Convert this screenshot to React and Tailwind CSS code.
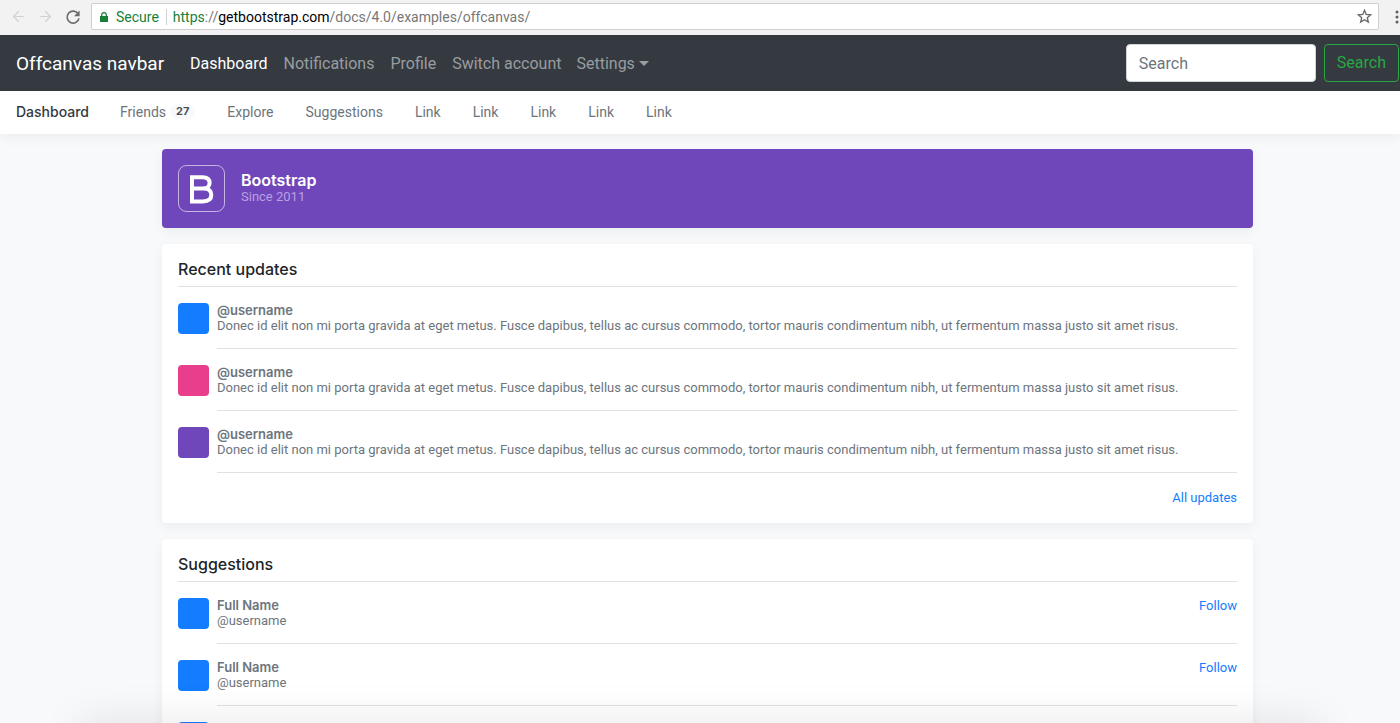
import { ArrowLeft, ArrowRight } from "lucide-react";

const navLinks = ["Notifications", "Profile", "Switch account"];
const scrollerLinks = ["Explore", "Suggestions", "Link", "Link", "Link", "Link", "Link"];
const updateColors = ["bg-[#147dff]", "bg-[#e83e8c]", "bg-[#6f47ba]"];
const updateText =
  "Donec id elit non mi porta gravida at eget metus. Fusce dapibus, tellus ac cursus commodo, tortor mauris condimentum nibh, ut fermentum massa justo sit amet risus.";

function BrowserBar() {
  return (
    <div className="flex h-[35px] shrink-0 items-center bg-[#f2f2f2] pb-0.5 pl-2.5">
      <button type="button" aria-label="Back" className="text-[#d2d2d2]">
        <ArrowLeft size={17} strokeWidth={1.75} />
      </button>
      <button type="button" aria-label="Forward" className="ml-2.5 text-[#d2d2d2]">
        <ArrowRight size={17} strokeWidth={1.75} />
      </button>
      <button type="button" aria-label="Reload" className="ml-2.5 text-[#6b6b6b]">
        <svg viewBox="0 0 18 18" className="size-[18px]" fill="none" stroke="currentColor" strokeWidth="1.7">
          <path d="M14 5.6A6 6 0 1 0 15 10.4" />
          <path d="M15.6 2.6v5.6H10z" fill="currentColor" stroke="none" />
        </svg>
      </button>
      <div className="ml-[9px] flex h-[27px] flex-1 items-center rounded-xs border border-[#cfcfcf] bg-white pr-1.5 pl-2 text-sm">
        <svg viewBox="0 0 8 10" className="h-2.5 w-2" fill="#188038">
          <path d="M0 4h8v6H0z" />
          <path d="M1.7 4.5V3a2.3 2.3 0 0 1 4.6 0v1.5" fill="none" stroke="#188038" strokeWidth="1.2" />
        </svg>
        <span className="ml-2 text-[#188038]">Secure</span>
        <span className="mr-1.5 ml-[7px] h-4 w-px bg-[#d0d0d0]" />
        <span className="flex-1 text-[#777]">
          <span className="text-[#188038]">https</span>://<span className="text-black">getbootstrap.com</span>
          /docs/4.0/examples/offcanvas/
        </span>
        <button type="button" aria-label="Bookmark this page" className="text-[#666]">
          <svg viewBox="0 0 14 14" className="size-[15px]" fill="none" stroke="currentColor" strokeWidth="1.2">
            <path d="M7 1.2l1.6 3.9 4.2.3-3.2 2.7 1 4.1L7 10l-3.6 2.2 1-4.1-3.2-2.7 4.2-.3z" />
          </svg>
        </button>
      </div>
      <button type="button" aria-label="Menu" className="ml-4 w-[5px]">
        <svg viewBox="0 0 4 14" className="h-3.5 w-1" fill="#5f5f5f">
          <circle cx="2" cy="2" r="1.5" />
          <circle cx="2" cy="7" r="1.5" />
          <circle cx="2" cy="12" r="1.5" />
        </svg>
      </button>
    </div>
  );
}

function Navbar() {
  return (
    <nav className="flex h-14 shrink-0 items-center bg-[#343a40] pr-px pl-4 text-base">
      <a href="#" className="pt-0.5 text-[19px] text-white">Offcanvas navbar</a>
      <div className="ml-[26px] flex flex-1 gap-4 pt-0.5 text-[#999da0]">
        <a href="#" className="text-white">Dashboard</a>
        {navLinks.map((label) => (
          <a key={label} href="#">{label}</a>
        ))}
        <button type="button" className="-ml-px flex items-center gap-1">
          Settings
          <span className="mb-0.5 border-x-[5px] border-t-[5px] border-x-transparent border-t-current" />
        </button>
      </div>
      <form className="flex gap-2">
        <input
          type="text"
          placeholder="Search"
          aria-label="Search"
          className="h-[38px] w-[190px] rounded border border-[#ced4da] bg-white px-3 placeholder:text-[#6c757d]"
        />
        <button type="button" className="h-[38px] rounded border border-[#28a745] px-3 text-[#28a745]">
          Search
        </button>
      </form>
    </nav>
  );
}

function NavScroller() {
  return (
    <nav className="relative flex h-[43px] shrink-0 items-center gap-8 bg-white px-4 pb-0.5 text-sm text-[#6c757d] shadow-[0_4px_12px_rgba(0,0,0,0.05)]">
      <a href="#" className="font-[Inter,sans-serif] font-medium text-[#343a40]">Dashboard</a>
      <a href="#" className="-ml-px flex items-center">
        Friends
        <span className="ml-1 rounded-full bg-[#f8f9fa] px-1.5 font-[Inter,sans-serif] text-[11px] font-bold text-[#495057]">27</span>
      </a>
      {scrollerLinks.map((label, i) => (
        <a key={i} href="#">{label}</a>
      ))}
    </nav>
  );
}

function Card({ title, children }) {
  return (
    <section className="mt-4 rounded bg-white p-4 shadow-[0_4px_12px_rgba(0,0,0,0.05)]">
      <h6 className="border-b border-[#dee2e6] pb-[7px] font-[Inter,sans-serif] text-base leading-[19px] font-medium text-[#212529]">
        {title}
      </h6>
      {children}
    </section>
  );
}

function MediaRow({ color, title, text, action }) {
  return (
    <div className="flex items-start pt-4 text-[13px] leading-[15px] text-[#6c757d]">
      <div className={`mr-2 size-[31px] shrink-0 rounded ${color}`} />
      <div className="flex flex-1 justify-between border-b border-[#dee2e6] pb-[15px]">
        <div>
          <strong className="block font-[Inter,sans-serif] font-semibold">{title}</strong>
          {text}
        </div>
        {action && <a href="#" className="text-[#147dff]">{action}</a>}
      </div>
    </div>
  );
}

export default function App() {
  return (
    <div className="relative flex h-screen flex-col overflow-hidden bg-[#f8f9fa] font-[Roboto,sans-serif]">
      <BrowserBar />
      <Navbar />
      <NavScroller />
      <main className="min-h-0 flex-1 overflow-hidden pl-[15px]">
        <div className="mx-auto max-w-[1091px]">
          <header className="mt-[15px] flex items-center rounded bg-[#6f47ba] p-4 text-white shadow-[0_4px_12px_rgba(0,0,0,0.05)]">
            <svg viewBox="0 0 47 47" className="mr-4 size-[47px]" fill="none" stroke="#fff">
              <rect x="0.5" y="0.5" width="46" height="46" rx="8" strokeOpacity="0.6" />
              <path
                d="M14 12.2h10.4c4.6 0 7.2 2.1 7.2 5.7 0 3.3-2.6 5.5-6.6 5.5H14h11.6c4.8 0 7.7 2.4 7.7 6.4 0 4.3-3.1 6.6-8.5 6.6H14z"
                strokeWidth="4"
              />
            </svg>
            <div>
              <h6 className="font-[Inter,sans-serif] text-base leading-4 font-semibold">Bootstrap</h6>
              <small className="block text-[13px] leading-[17px] text-[#b9a0e2]">Since 2011</small>
            </div>
          </header>
          <Card title="Recent updates">
            {updateColors.map((color) => (
              <MediaRow key={color} color={color} title="@username" text={updateText} />
            ))}
            <div className="mt-4 text-right text-[13px] leading-[18px]">
              <a href="#" className="text-[#147dff]">All updates</a>
            </div>
          </Card>
          <Card title="Suggestions">
            {[0, 1, 2].map((i) => (
              <MediaRow key={i} color="bg-[#147dff]" title="Full Name" text="@username" action="Follow" />
            ))}
          </Card>
        </div>
      </main>
      <div className="pointer-events-none absolute inset-x-20 -bottom-20 h-20 shadow-[0_0_44px_rgba(0,0,0,0.1)]" />
    </div>
  );
}
